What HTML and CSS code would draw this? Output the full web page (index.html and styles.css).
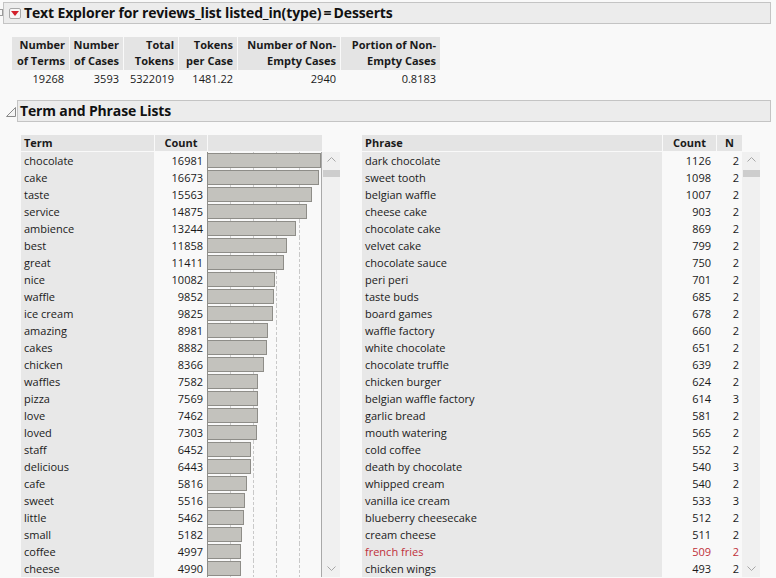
FILE: index.html
```html
<!DOCTYPE html>
<html lang="en">
<head>
<meta charset="utf-8">
<title>Text Explorer</title>
<link rel="stylesheet" href="styles.css">
</head>
<body>
<div class="top-row">
  <span class="stub"></span>
  <div class="title-bar">
    <span class="red-btn"><svg width="8" height="5" viewBox="0 0 8 5"><polygon points="0,0 8,0 4,5" fill="#d3212c"/></svg></span>
    <span class="title">Text Explorer for reviews_list listed_in(type)&thinsp;=&thinsp;Desserts</span>
  </div>
</div>

<div class="stats-wrap">
  <table class="stats">
    <thead>
      <tr>
        <th class="w1">Number<br>of Terms</th>
        <th class="w2">Number<br>of Cases</th>
        <th class="w3">Total<br>Tokens</th>
        <th class="w4">Tokens<br>per Case</th>
        <th class="w5">Number of Non-<br>Empty Cases</th>
        <th class="w6">Portion of Non-<br>Empty Cases</th>
      </tr>
    </thead>
    <tbody>
      <tr>
        <td class="v1">19268</td>
        <td>3593</td>
        <td>5322019</td>
        <td>1481.22</td>
        <td>2940</td>
        <td>0.8183</td>
      </tr>
    </tbody>
  </table>
</div>

<div class="sub-row">
  <span class="disc"><svg width="10" height="10" viewBox="0 0 10 10"><polygon points="0.5,9.5 9.5,9.5 9.5,0.5" fill="#f4f4f4" stroke="#8a8a8a" stroke-width="1"/></svg></span>
  <div class="sub-bar"><span class="sub-title">Term and Phrase Lists</span></div>
</div>

<div class="lists">
  <div class="block">
    <div class="table">
      <div class="thead">
        <div class="h-term">Term</div>
        <div class="h-count">Count</div>
        <div class="h-bar"></div>
      </div>
      <div class="trow"><div class="c-term">chocolate</div><div class="c-count">16981</div><div class="c-bar"><div class="bar" style="width:113px"></div></div></div>
      <div class="trow"><div class="c-term">cake</div><div class="c-count">16673</div><div class="c-bar"><div class="bar" style="width:111px"></div></div></div>
      <div class="trow"><div class="c-term">taste</div><div class="c-count">15563</div><div class="c-bar"><div class="bar" style="width:104px"></div></div></div>
      <div class="trow"><div class="c-term">service</div><div class="c-count">14875</div><div class="c-bar"><div class="bar" style="width:99px"></div></div></div>
      <div class="trow"><div class="c-term">ambience</div><div class="c-count">13244</div><div class="c-bar"><div class="bar" style="width:88px"></div></div></div>
      <div class="trow"><div class="c-term">best</div><div class="c-count">11858</div><div class="c-bar"><div class="bar" style="width:79px"></div></div></div>
      <div class="trow"><div class="c-term">great</div><div class="c-count">11411</div><div class="c-bar"><div class="bar" style="width:76px"></div></div></div>
      <div class="trow"><div class="c-term">nice</div><div class="c-count">10082</div><div class="c-bar"><div class="bar" style="width:67px"></div></div></div>
      <div class="trow"><div class="c-term">waffle</div><div class="c-count">9852</div><div class="c-bar"><div class="bar" style="width:66px"></div></div></div>
      <div class="trow"><div class="c-term">ice cream</div><div class="c-count">9825</div><div class="c-bar"><div class="bar" style="width:65px"></div></div></div>
      <div class="trow"><div class="c-term">amazing</div><div class="c-count">8981</div><div class="c-bar"><div class="bar" style="width:60px"></div></div></div>
      <div class="trow"><div class="c-term">cakes</div><div class="c-count">8882</div><div class="c-bar"><div class="bar" style="width:59px"></div></div></div>
      <div class="trow"><div class="c-term">chicken</div><div class="c-count">8366</div><div class="c-bar"><div class="bar" style="width:56px"></div></div></div>
      <div class="trow"><div class="c-term">waffles</div><div class="c-count">7582</div><div class="c-bar"><div class="bar" style="width:50px"></div></div></div>
      <div class="trow"><div class="c-term">pizza</div><div class="c-count">7569</div><div class="c-bar"><div class="bar" style="width:50px"></div></div></div>
      <div class="trow"><div class="c-term">love</div><div class="c-count">7462</div><div class="c-bar"><div class="bar" style="width:50px"></div></div></div>
      <div class="trow"><div class="c-term">loved</div><div class="c-count">7303</div><div class="c-bar"><div class="bar" style="width:49px"></div></div></div>
      <div class="trow"><div class="c-term">staff</div><div class="c-count">6452</div><div class="c-bar"><div class="bar" style="width:43px"></div></div></div>
      <div class="trow"><div class="c-term">delicious</div><div class="c-count">6443</div><div class="c-bar"><div class="bar" style="width:43px"></div></div></div>
      <div class="trow"><div class="c-term">cafe</div><div class="c-count">5816</div><div class="c-bar"><div class="bar" style="width:39px"></div></div></div>
      <div class="trow"><div class="c-term">sweet</div><div class="c-count">5516</div><div class="c-bar"><div class="bar" style="width:37px"></div></div></div>
      <div class="trow"><div class="c-term">little</div><div class="c-count">5462</div><div class="c-bar"><div class="bar" style="width:36px"></div></div></div>
      <div class="trow"><div class="c-term">small</div><div class="c-count">5182</div><div class="c-bar"><div class="bar" style="width:34px"></div></div></div>
      <div class="trow"><div class="c-term">coffee</div><div class="c-count">4997</div><div class="c-bar"><div class="bar" style="width:33px"></div></div></div>
      <div class="trow"><div class="c-term">cheese</div><div class="c-count">4990</div><div class="c-bar"><div class="bar" style="width:33px"></div></div></div>
    </div>
    <div class="scroll">
      <svg class="chev" width="9" height="5" viewBox="0 0 9 5"><polyline points="0.5,4.5 4.5,0.5 8.5,4.5" fill="none" stroke="#a6a6a6" stroke-width="1"/></svg>
      <div class="thumb"></div>
      <div class="spacer"></div>
      <svg class="chev down" width="9" height="5" viewBox="0 0 9 5"><polyline points="0.5,0.5 4.5,4.5 8.5,0.5" fill="none" stroke="#a6a6a6" stroke-width="1"/></svg>
    </div>
  </div>

  <div class="block">
    <div class="table">
      <div class="thead">
        <div class="h-phrase">Phrase</div>
        <div class="h-pcount">Count</div>
        <div class="h-n">N</div>
      </div>
      <div class="trow"><div class="c-phrase">dark chocolate</div><div class="c-pcount">1126</div><div class="c-n">2</div></div>
      <div class="trow"><div class="c-phrase">sweet tooth</div><div class="c-pcount">1098</div><div class="c-n">2</div></div>
      <div class="trow"><div class="c-phrase">belgian waffle</div><div class="c-pcount">1007</div><div class="c-n">2</div></div>
      <div class="trow"><div class="c-phrase">cheese cake</div><div class="c-pcount">903</div><div class="c-n">2</div></div>
      <div class="trow"><div class="c-phrase">chocolate cake</div><div class="c-pcount">869</div><div class="c-n">2</div></div>
      <div class="trow"><div class="c-phrase">velvet cake</div><div class="c-pcount">799</div><div class="c-n">2</div></div>
      <div class="trow"><div class="c-phrase">chocolate sauce</div><div class="c-pcount">750</div><div class="c-n">2</div></div>
      <div class="trow"><div class="c-phrase">peri peri</div><div class="c-pcount">701</div><div class="c-n">2</div></div>
      <div class="trow"><div class="c-phrase">taste buds</div><div class="c-pcount">685</div><div class="c-n">2</div></div>
      <div class="trow"><div class="c-phrase">board games</div><div class="c-pcount">678</div><div class="c-n">2</div></div>
      <div class="trow"><div class="c-phrase">waffle factory</div><div class="c-pcount">660</div><div class="c-n">2</div></div>
      <div class="trow"><div class="c-phrase">white chocolate</div><div class="c-pcount">651</div><div class="c-n">2</div></div>
      <div class="trow"><div class="c-phrase">chocolate truffle</div><div class="c-pcount">639</div><div class="c-n">2</div></div>
      <div class="trow"><div class="c-phrase">chicken burger</div><div class="c-pcount">624</div><div class="c-n">2</div></div>
      <div class="trow"><div class="c-phrase">belgian waffle factory</div><div class="c-pcount">614</div><div class="c-n">3</div></div>
      <div class="trow"><div class="c-phrase">garlic bread</div><div class="c-pcount">581</div><div class="c-n">2</div></div>
      <div class="trow"><div class="c-phrase">mouth watering</div><div class="c-pcount">565</div><div class="c-n">2</div></div>
      <div class="trow"><div class="c-phrase">cold coffee</div><div class="c-pcount">552</div><div class="c-n">2</div></div>
      <div class="trow"><div class="c-phrase">death by chocolate</div><div class="c-pcount">540</div><div class="c-n">3</div></div>
      <div class="trow"><div class="c-phrase">whipped cream</div><div class="c-pcount">540</div><div class="c-n">2</div></div>
      <div class="trow"><div class="c-phrase">vanilla ice cream</div><div class="c-pcount">533</div><div class="c-n">3</div></div>
      <div class="trow"><div class="c-phrase">blueberry cheesecake</div><div class="c-pcount">512</div><div class="c-n">2</div></div>
      <div class="trow"><div class="c-phrase">cream cheese</div><div class="c-pcount">511</div><div class="c-n">2</div></div>
      <div class="trow selected"><div class="c-phrase">french fries</div><div class="c-pcount">509</div><div class="c-n">2</div></div>
      <div class="trow"><div class="c-phrase">chicken wings</div><div class="c-pcount">493</div><div class="c-n">2</div></div>
    </div>
    <div class="scroll">
      <svg class="chev" width="9" height="5" viewBox="0 0 9 5"><polyline points="0.5,4.5 4.5,0.5 8.5,4.5" fill="none" stroke="#a6a6a6" stroke-width="1"/></svg>
      <div class="thumb"></div>
      <div class="spacer"></div>
      <svg class="chev down" width="9" height="5" viewBox="0 0 9 5"><polyline points="0.5,0.5 4.5,4.5 8.5,0.5" fill="none" stroke="#a6a6a6" stroke-width="1"/></svg>
    </div>
  </div>
</div>
</body>
</html>
```

FILE: styles.css
```css
html, body {
  margin: 0;
  padding: 0;
}
body {
  background: #f9f9f9;
  font-family: "Open Sans", "Noto Sans", sans-serif;
  font-size: 11px;
  color: #1a1a1a;
  overflow: hidden;
}

/* top outline header */
.top-row {
  display: flex;
  align-items: flex-start;
  padding-top: 2px;
}
.stub {
  width: 3px;
  height: 7px;
  margin-top: 7px;
  box-sizing: border-box;
  border: 1px solid #9a9a9a;
  border-left: none;
}
.title-bar {
  flex: 1;
  margin-right: 5px;
  height: 22px;
  box-sizing: border-box;
  border: 1px solid #c4c4c4;
  background: #ececec;
  display: flex;
  align-items: center;
  padding-left: 5px;
}
.red-btn {
  width: 12px;
  height: 11px;
  box-sizing: border-box;
  border: 1px solid #a8a8a8;
  border-radius: 2px;
  background: #f7f7f7;
  display: flex;
  align-items: center;
  justify-content: center;
  margin-right: 3px;
}
.title {
  font-weight: bold;
  font-size: 14px;
  letter-spacing: -0.15px;
  color: #111;
  line-height: 20px;
}

/* stats table */
.stats-wrap {
  padding: 13px 0 0 12px;
}
.stats {
  border-collapse: separate;
  border-spacing: 0;
}
.stats th {
  background: #e4e4e4;
  font-weight: bold;
  text-align: right;
  vertical-align: bottom;
  line-height: 16px;
  height: 33px;
  padding: 0 4px 1px 0;
  box-sizing: border-box;
  border-left: 1px solid #f9f9f9;
  white-space: nowrap;
}
.stats th.w1 { border-left: none; width: 57px; }
.stats th.w2 { width: 54px; }
.stats th.w3 { width: 55px; }
.stats th.w4 { width: 59px; }
.stats th.w5 { width: 103px; }
.stats th.w6 { width: 100px; }
.stats td {
  text-align: right;
  line-height: 16px;
  padding: 1px 4px 0 0;
}
.stats td.v1 { padding-right: 5px; }

/* second outline */
.sub-row {
  display: flex;
  margin-top: 13px;
}
.disc {
  width: 17px;
  padding: 7px 0 0 6px;
  box-sizing: border-box;
}
.disc svg { display: block; }
.sub-bar {
  flex: 1;
  margin-right: 5px;
  height: 22px;
  box-sizing: border-box;
  border: 1px solid #c4c4c4;
  background: #ececec;
  padding-left: 2px;
  display: flex;
  align-items: center;
}
.sub-title {
  font-weight: bold;
  font-size: 14px;
  letter-spacing: -0.15px;
  color: #111;
  line-height: 20px;
}

/* lists */
.lists {
  display: flex;
  gap: 22px;
  padding: 13px 0 0 21px;
}
.block {
  display: flex;
  align-items: stretch;
}
.thead {
  display: flex;
  height: 16px;
  margin-bottom: 1px;
  line-height: 16px;
  font-weight: bold;
}
.thead > div {
  background: #e4e4e4;
  box-sizing: border-box;
}
.h-term { width: 133px; padding-left: 3px; }
.h-count { width: 52px; margin-left: 1px; text-align: center; }
.h-bar { width: 114px; margin-left: 1px; }
.h-phrase { width: 300px; padding-left: 3px; }
.h-pcount { width: 53px; margin-left: 1px; text-align: center; }
.h-n { width: 25px; margin-left: 1px; text-align: center; }

.trow {
  display: flex;
  height: 17px;
  line-height: 17px;
}
.trow > div { box-sizing: border-box; white-space: nowrap; }
.c-term {
  width: 133px;
  background: #e8e8e8;
  padding-left: 3px;
}
.c-count {
  width: 53px;
  text-align: right;
  padding-right: 4px;
}
.c-bar {
  width: 115px;
  border-left: 1px solid #8e8d88;
  border-right: 1px solid #a9a9a9;
  padding-top: 1px;
  background-image:
    repeating-linear-gradient(to bottom, transparent 0 3px, #f9f9f9 3px 5px),
    repeating-linear-gradient(to right, transparent 0 22px, #c9c9c9 22px 23px);
}
.bar {
  height: 15px;
  box-sizing: border-box;
  border: 1px solid #8e8d88;
  border-left: none;
  background: #c3c2bd;
}
.c-phrase {
  width: 300px;
  background: #e8e8e8;
  padding-left: 3px;
}
.c-pcount {
  width: 54px;
  text-align: right;
  padding-right: 5px;
}
.c-n {
  width: 26px;
  text-align: right;
  padding-right: 3px;
}
.trow.selected { color: #c0303a; }

/* scroll column */
.scroll {
  width: 18px;
  margin-top: 17px;
  background: #f0f0f0;
  display: flex;
  flex-direction: column;
  align-items: center;
}
.chev { display: block; margin-top: 5px; }
.chev.down { margin-top: 0; margin-bottom: 6px; }
.thumb {
  align-self: stretch;
  margin-left: 1px;
  height: 7px;
  margin-top: 8px;
  background: #cdcdcd;
}
.spacer { flex: 1; }
```
